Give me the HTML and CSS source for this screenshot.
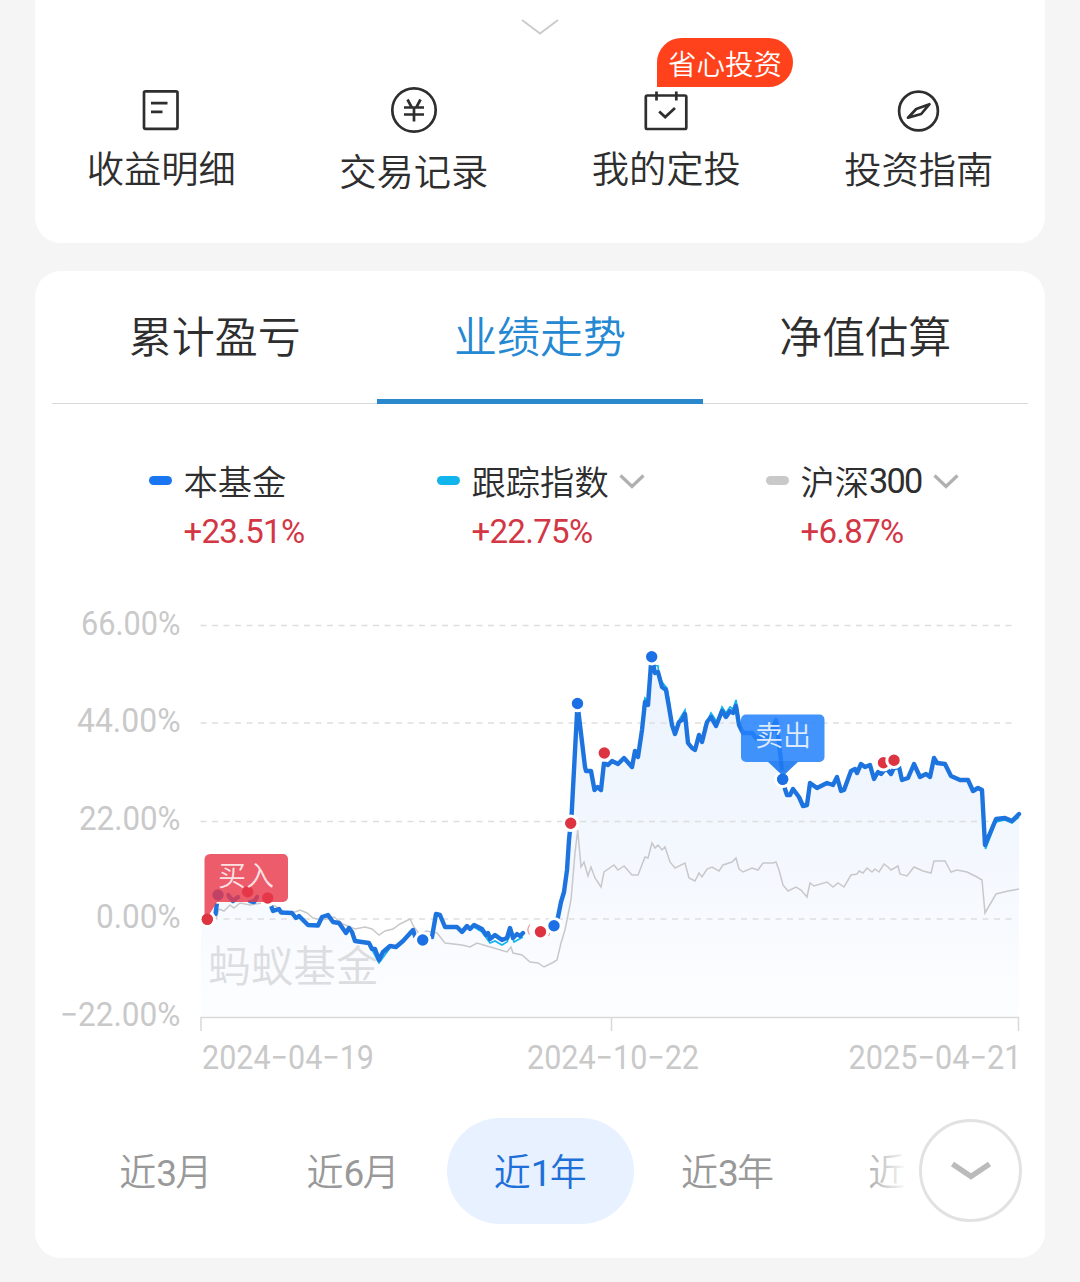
FILE: index.html
```html
<!DOCTYPE html>
<html lang="zh-CN">
<head>
<meta charset="utf-8">
<title>业绩走势</title>
<link rel="stylesheet" href="styles.css">
</head>
<body>
<main class="page">
  <section class="card shortcuts">
    <svg class="expand" width="40" height="18" viewBox="0 0 40 18"><path d="M2 2l18 13.500L38 2"/></svg>
    <nav class="shortcut-grid">
      <a class="shortcut">
        <svg class="icon" width="50" height="50" viewBox="0 0 50 50"><rect x="8" y="6.300" width="33.500" height="37.500" rx="1.500"/><path d="M15 18.200h16.500M15 26.800h11.500"/></svg>
        <span>收益明细</span>
      </a>
      <a class="shortcut shortcut-records">
        <svg class="icon" width="50" height="50" viewBox="0 0 50 50"><circle cx="25" cy="25" r="21.700"/><path d="M18.500 14.500l4 7.500M31.500 14.500l-4 7.500M15 22.500h20M15 29.500h20M25 22.500v14"/></svg>
        <span>交易记录</span>
      </a>
      <a class="shortcut">
        <svg class="icon" width="50" height="50" viewBox="0 0 50 50"><rect x="4.800" y="10.500" width="40.500" height="33.500" rx="1.500"/><path d="M15.500 6.500v9M35.300 6.500v9M18.200 26.500l6 5.600 9.800-9"/></svg>
        <span>我的定投</span>
        <b class="badge">省心投资</b>
      </a>
      <a class="shortcut shortcut-guide">
        <svg class="icon" width="50" height="50" viewBox="0 0 50 50"><circle cx="24.500" cy="26" r="19.400"/><path d="M35.500 19.200L22.200 24 14 32.700 27.200 29z" stroke-linejoin="round"/></svg>
        <span>投资指南</span>
      </a>
    </nav>
  </section>

  <section class="card performance">
    <nav class="tabs">
      <a class="tab">累计盈亏</a>
      <a class="tab tab-active">业绩走势</a>
      <a class="tab">净值估算</a>
    </nav>

    <div class="legend">
      <div class="series">
        <i class="swatch swatch-fund"></i>
        <span class="name">本基金</span>
        <span class="gain">+23.51%</span>
      </div>
      <div class="series">
        <i class="swatch swatch-index"></i>
        <span class="name">跟踪指数<svg class="caret" width="26" height="18" viewBox="0 0 26 18"><path d="M1.500 3.500l11.500 11 11.500-11"/></svg></span>
        <span class="gain">+22.75%</span>
      </div>
      <div class="series">
        <i class="swatch swatch-csi"></i>
        <span class="name">沪深<span class="digits">300</span><svg class="caret" width="26" height="18" viewBox="0 0 26 18"><path d="M1.500 3.500l11.500 11 11.500-11"/></svg></span>
        <span class="gain">+6.87%</span>
      </div>
    </div>

    <svg class="chart" width="1010" height="500" viewBox="35 590 1010 500">
      <defs>
        <linearGradient id="fill" gradientUnits="userSpaceOnUse" x1="0" y1="650" x2="0" y2="1017">
          <stop offset="0" stop-color="#1a75e8" stop-opacity=".09"/>
          <stop offset=".55" stop-color="#3b82f0" stop-opacity=".06"/>
          <stop offset="1" stop-color="#3b82f0" stop-opacity=".012"/>
        </linearGradient>
      </defs>
      <path class="area" d="M201 1017V919H207L216 900 233 900 257 898 271 907 292 913 308 925 318 925 328 914 346 932 355 941 369 943 379 961 390 946 403 941 413 930 422 940 432 937 436 913 445 927 474 925 490 940 507 938 523 933 540 932 554 926 561 902 567 870 571 823 577.500 704 586 771 591 771 594.500 791 601 791 604 763 624 758 632 767 638 757 645 700 651.500 660 662 687 669 707 675 734 685 713 688 743 695 750 711 715 716 726 736 703 743 733 776 733 782 770 787 795 793 789 803 807 810 783 817 788 833 785 841 791 851 771 870 765 874 779 891 774 899 767 902 780 914 764 920 777 930 777 934 757 945 764 951 776 968 780 973 791 982 790 985 847 996 819 1012 821 1019 814V1017z"/>
      <text class="watermark" x="208" y="982">蚂蚁基金</text>
      <path class="grid" d="M200.500 625.500H1017M200.500 723H1017M200.500 821.500H1017M200.500 919H1017"/>
      <path class="axis" d="M201 1031V1017.500H1018.500V1031M611.500 1017.500V1031"/>

      <polyline class="line-csi" points="216,919 219,909 224,911 230,905 234,908 240,903 250,905 262,903 275,906 285,912 295,912 300,910 307,913 313,918 322,920 334,917 343,924 355,929 365,927 372,929 379,935 385,931 393,929 400,924 410,919 414,927 420,935 426,931 437,933 445,943 462,945 470,947 477,943 487,946 507,952 511,947 513,953 522,955 530,962 538,963 544,967 552,963 557,960 561,943 565,930 571,900 575,853 577.700,830 581,867 584,862 588,876 591,867 595,878 601,887 604,872 614,865 618,870 624,866 632,875 638,875 645,857 648,858 652,843 655,848 658,845 662,850 665,847 670,862 675,868 685,863 689,878 695,881 699,873 702,877 707,869 712,867 719,871 723,865 732,862 736,858 739,869 743,872 752,868 758,870 763,863 773,863 776,862 779,870 783,885 788,891 796,887 801,890 807,897 810,883 814,886 827,882 833,887 838,883 844,887 851,875 857,874 859,871 863,873 867,868 872,872 875,869 879,872 884,864 888,867 891,870 898,866 900,874 907,876 914,867 923,871 931,873 934,861 945,861 951,872 957,870 967,872 977,877 982,880 985,913 996,894 1008,891 1019,889"/>
      <g class="line-index">
        <polyline points="355,942 369,944 379,963 390,948"/>
        <polyline points="474,927 482,932 490,943 495,941 502,945 507,942 511,932 514,942 523,937"/>
        <polyline points="643,710 645,698 648,701 651,665 658,666 659,675 662,682 667,688 670,706"/>
        <polyline points="679,720 685,710 688,738"/>
        <polyline points="704,728 711,713 717,722 722,707 726,713 730,707 733,709 736,700 740,724"/>
        <polyline points="982,790 985.500,849 996,822 1005,820 1012,823 1019,817"/>
      </g>
      <g class="line-fund">
        <polyline points="215.500,914 218,895"/>
        <polyline points="228,895 233,901 238,897"/>
        <polyline points="250,901 254,902 257,897"/>
        <polyline points="271.500,907 273,911 279,909 281,912.500 292,913 296,918 299,916 303,920 308,925 318,925.500 322,917 328,915 333,922 339,923 346,933 349,928 352,932 355,941 369,943 372,949 375,949 379,960 383,952 390,946 396,947 403,941 413,930 415,936"/>
        <polyline points="432,937 436,914 440,915 445,927 457,927 462,932 467,926 470,929 474,925 482,929 486,935 488,933 490,939 495,935 502,940 507,938 510,928 513,938 517,934 520,936 523,933"/>
        <polyline points="554,926 558,917 561,902 564,892 567,870 569,840 570.700,823 571.700,813 577.500,704 585,767 586,771 591,771 594.500,790 597.500,787 601,790 604,763 608,765 612,761 618,764 624,758 632,767 635,751 638,757 642,730 645,702 648,705 651.500,657 655,673 658,672 662,687 666,690 669,707 672,725 675,734 679,722 682,720 685,714 688,743 692,748 695,750 699,735 702,742 707,722 711,717 716,726 722,711 726,717 730,711 733,713 736,706 739,725 743,733 752,733 757,739 764,735 770,737 776,720 780,752 782,770 785,789 787,795 790,795 793,789 799,797 803,806 807,805 810,783 817,788 827,783 833,785 837,777 841,791 844,790 851,771 855,769 857,773 861,764 865,767 870,765 874,779 878,772 881,774 886,768 891,774 894,768 899,767 902,780 908,778 914,764 920,777 926,774 930,777 934,758 937,763 945,764 951,776 960,780 968,780 973,791 978,788 982,790 985,845 996,819 1005,818 1012,821 1019,814"/>
      </g>

      <path class="halo-arcs" d="M530 924.500q-4 5-.5 10M535 926q-3 4-.5 9M548 928q3 4 .5 8"/>
      <g class="dot dot-sell">
        <circle cx="218" cy="895" r="7.200"/><circle cx="422.700" cy="940" r="7.200"/><circle cx="554" cy="925.700" r="7.200"/><circle cx="577.500" cy="703.500" r="7.200"/><circle cx="651.700" cy="656.700" r="7.200"/><circle cx="782.700" cy="779.300" r="7.200"/>
      </g>
      <g class="dot dot-buy">
        <circle cx="207.300" cy="919.300" r="7.200"/><circle cx="247.700" cy="891.700" r="7.200"/><circle cx="267.700" cy="898" r="7.200"/><circle cx="540.500" cy="931.700" r="7.200"/><circle cx="570.700" cy="823.300" r="7.200"/><circle cx="604.300" cy="753" r="7.200"/><circle cx="883.500" cy="762.700" r="7.200"/><circle cx="894" cy="760.300" r="7.200"/>
      </g>

      <path class="bubble bubble-buy" d="M210 854H283a5 5 0 0 1 5 5V897a5 5 0 0 1-5 5H217L209 915 204.500 919V859.500a5.500 5.500 0 0 1 5.500-5.500z"/>
      <text class="bubble-text" x="218" y="885.500">买入</text>
      <path class="bubble bubble-sell" d="M746 714.500H819.500a5 5 0 0 1 5 5V757a5 5 0 0 1-5 5H798L783 776 768 762H746a5 5 0 0 1-5-5V719.500a5 5 0 0 1 5-5z"/>
      <path class="bubble-edge" d="M768 761H798L783 776z"/>
      <circle class="anchor-buy" cx="207.300" cy="919.300" r="5.500"/>
      <circle class="anchor-sell" cx="782.700" cy="779.300" r="5.500"/>
      <text class="bubble-text" x="755" y="746">卖出</text>

      <g class="scale">
        <text x="81" y="634.500" textLength="99.500" lengthAdjust="spacingAndGlyphs">66.00%</text>
        <text x="77" y="731.500" textLength="103.500" lengthAdjust="spacingAndGlyphs">44.00%</text>
        <text x="79" y="829.500" textLength="101.500" lengthAdjust="spacingAndGlyphs">22.00%</text>
        <text x="96" y="927.500" textLength="84.500" lengthAdjust="spacingAndGlyphs">0.00%</text>
        <text x="60" y="1025.500" textLength="120.500" lengthAdjust="spacingAndGlyphs">−22.00%</text>
        <text x="202" y="1069" textLength="172" lengthAdjust="spacingAndGlyphs">2024−04−19</text>
        <text x="527" y="1069" textLength="172" lengthAdjust="spacingAndGlyphs">2024−10−22</text>
        <text x="848.500" y="1069" textLength="173" lengthAdjust="spacingAndGlyphs">2025−04−21</text>
      </g>
    </svg>

    <div class="ranges">
      <a class="range">近<span class="digits">3</span>月</a>
      <a class="range">近<span class="digits">6</span>月</a>
      <a class="range range-active">近<span class="digits">1</span>年</a>
      <a class="range">近<span class="digits">3</span>年</a>
      <a class="range">近<span class="digits">5</span>年</a>
      <div class="fade"></div>
      <button class="more" type="button"><svg width="42" height="24" viewBox="0 0 42 24"><path d="M2.500 5l18.500 12.500L39.500 5"/></svg></button>
    </div>
  </section>
</main>
</body>
</html>
```
FILE: styles.css
```css
* { box-sizing: border-box; }

body {
  margin: 0;
  background: #f5f5f5;
  color: #2e2e2e;
  font-family: "Noto Sans CJK SC", sans-serif;
  font-weight: 350;
}

.page {
  height: 1282px;
  padding: 0 35px;
  display: flex;
  flex-direction: column;
  gap: 28px;
  overflow: hidden;
}

svg { display: block; fill: none; }
.card { background: #fff; border-radius: 26px; }

/* Shortcuts */
.shortcuts {
  height: 243px;
  flex: none;
  border-radius: 0 0 26px 26px;
  padding-top: 18px;
}
.expand { margin: 0 auto; stroke: #ccc; stroke-width: 2; }
.shortcut-grid {
  display: grid;
  grid-template-columns: repeat(4, 1fr);
  margin-top: 49px;
}
.shortcut {
  position: relative;
  display: flex;
  flex-direction: column;
  align-items: center;
  gap: 7px;
  font-size: 37.300px;
  line-height: 50px;
}
.shortcut-records { gap: 10px; }
.shortcut-guide { gap: 8px; }
.icon { stroke: #2e2e2e; stroke-width: 2.700; }
.badge {
  position: absolute;
  left: 117px;
  top: -47px;
  width: 136px;
  height: 49px;
  border-radius: 25px 25px 25px 0;
  background: #ff411c;
  color: #fff;
  font-size: 28.500px;
  font-weight: 350;
  line-height: 49px;
  text-align: center;
}

/* Performance */
.performance { height: 987px; flex: none; overflow: hidden; }
.tabs {
  display: grid;
  grid-template-columns: repeat(3, 1fr);
  height: 133px;
  margin: 0 17px;
  border-bottom: 1px solid #d8d8d8;
}
.tab {
  height: 133px;
  text-align: center;
  font-size: 43px;
  line-height: 126px;
}
.tab-active { color: #2488d2; border-bottom: 5px solid #2a89cc; }

.legend {
  display: grid;
  grid-template-columns: 288px 329px 240px;
  margin-left: 114px;
  padding-top: 52px;
  height: 186px;
}
.series {
  display: grid;
  grid-template-columns: 23px 1fr;
  column-gap: 12px;
  grid-template-rows: 50px 50px;
  align-content: start;
  align-items: center;
}
.swatch { height: 9px; border-radius: 5px; margin-bottom: 2px; }
.swatch-fund { background: #1a76f0; }
.swatch-index { background: #12b4ec; }
.swatch-csi { background: #c9c9c9; }
.name {
  display: flex;
  align-items: center;
  margin: -2px 0 0 -.5px;
  font-size: 34.300px;
  line-height: 50px;
}
.digits { font-family: Roboto, sans-serif; font-weight: 400; letter-spacing: -1.800px; }
.name .digits { padding-top: 2px; }
.caret { margin: 2px 0 0 10px; stroke: #b0b0b0; stroke-width: 3.200; }
.name .digits + .caret { margin-left: 11px; }
.gain {
  grid-column: 2;
  margin-left: -.5px;
  color: #d33645;
  font-family: Roboto, sans-serif;
  font-size: 33px;
  font-weight: 400;
  letter-spacing: -.7px;
}

/* Chart */
.area { fill: url(#fill); }
.grid { stroke: #dedede; stroke-width: 1.500; stroke-dasharray: 6 5.500; }
.axis { stroke: #d9d9d9; stroke-width: 1.500; }
.watermark { fill: #dcdde0; font-size: 42.700px; }
.line-csi { stroke: #c8c8ca; stroke-width: 1.500; }
.line-index { stroke: #12b4ec; stroke-width: 1.700; }
.line-fund { stroke: #1e74df; stroke-width: 4.400; stroke-linejoin: round; stroke-linecap: round; }
.halo-arcs { stroke: #e99; stroke-width: 1.200; }
.dot { stroke: #fff; stroke-width: 3; }
.dot-sell { fill: #1a70e4; }
.dot-buy { fill: #dc3440; }
.bubble-buy { fill: #e8384a; fill-opacity: .82; }
.bubble-sell { fill: #2381fa; fill-opacity: .86; }
.bubble-edge { fill: #1a70e4; fill-opacity: .4; }
.anchor-buy { fill: #dc3440; }
.anchor-sell { fill: #1a70e4; }
.bubble-text { fill: #fff; fill-opacity: .82; font-size: 28px; }
.scale { fill: #c9c9c9; font-family: Roboto, sans-serif; font-size: 32.500px; font-weight: 400; }

/* Ranges */
.ranges {
  position: relative;
  display: grid;
  grid-template-columns: repeat(5, 187.300px);
  grid-template-rows: 106px;
  margin: 28px 0 0 37px;
  height: 106px;
}
.range {
  height: 106px;
  border-radius: 53px;
  color: #999;
  font-size: 37px;
  line-height: 104px;
  text-align: center;
}
.range-active { background: #e7f1ff; color: #1e70d8; }
.fade {
  position: absolute;
  left: 796px;
  top: 0;
  width: 177px;
  height: 106px;
  background: linear-gradient(90deg, rgba(255,255,255,.2), #fff 40px);
}
.more {
  position: absolute;
  left: 847px;
  top: 1px;
  width: 103px;
  height: 103px;
  display: grid;
  place-items: center;
  border: 3px solid #e2e2e2;
  border-radius: 50%;
  background: #fff;
  padding: 0;
}
.more path { stroke: #bbb; stroke-width: 5.500; }
```
